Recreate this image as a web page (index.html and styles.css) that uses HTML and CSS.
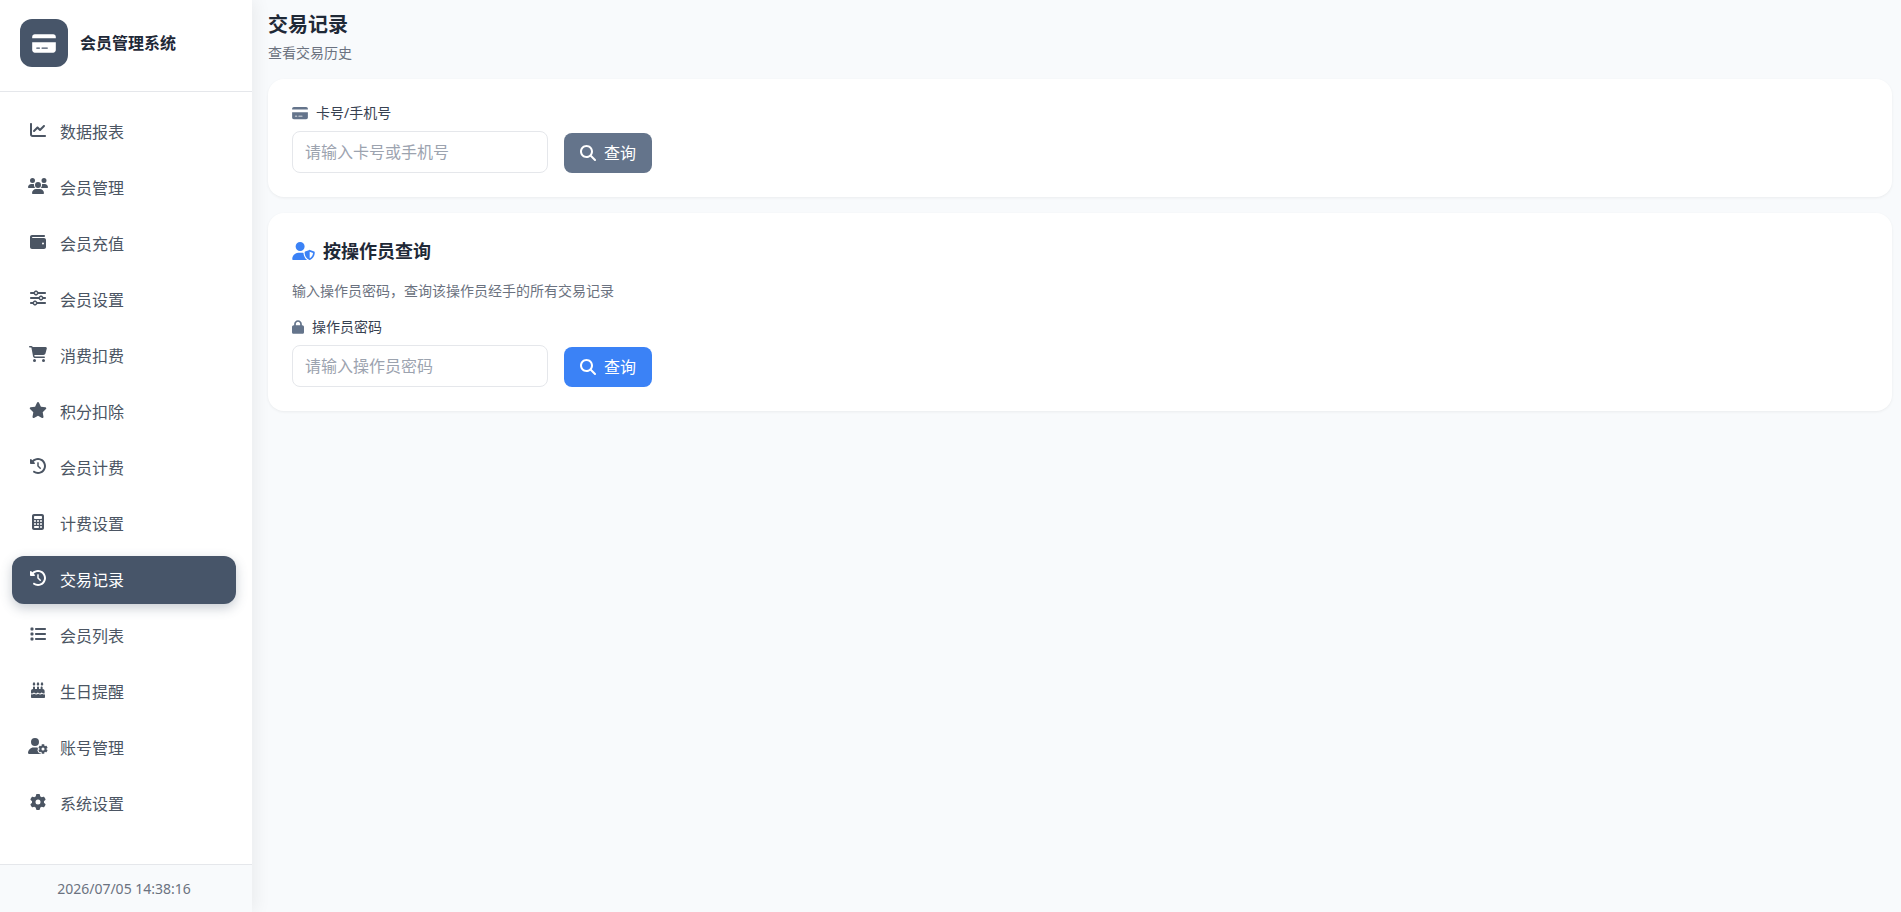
FILE: index.html
```
<!DOCTYPE html>
<html lang="zh-CN">
<head>
    <meta charset="UTF-8">
    <meta name="viewport" content="width=device-width, initial-scale=1.0">
    <title>会员管理系统</title>
    <link rel="stylesheet" href="styles.css">
</head>
<body>
    <!-- 图标 -->
    <svg class="icon-sprite" aria-hidden="true">
        <symbol id="i-card" viewBox="0 0 576 512"><path d="M64 32C28.7 32 0 60.7 0 96v32H576V96c0-35.3-28.7-64-64-64H64zM576 224H0V416c0 35.3 28.7 64 64 64H512c35.3 0 64-28.7 64-64V224zM112 352h64c8.8 0 16 7.2 16 16s-7.2 16-16 16H112c-8.8 0-16-7.2-16-16s7.2-16 16-16zm112 16c0-8.8 7.2-16 16-16H368c8.8 0 16 7.2 16 16s-7.2 16-16 16H240c-8.8 0-16-7.2-16-16z"/></symbol>
        <symbol id="i-chart" viewBox="0 0 512 512"><path d="M64 64c0-17.7-14.3-32-32-32S0 46.3 0 64V400c0 44.2 35.8 80 80 80H480c17.7 0 32-14.3 32-32s-14.3-32-32-32H80c-8.8 0-16-7.2-16-16V64zm406.6 86.6c12.5-12.5 12.5-32.8 0-45.3s-32.8-12.5-45.3 0L320 210.7l-57.4-57.4c-12.5-12.5-32.8-12.5-45.3 0l-112 112c-12.5 12.5-12.5 32.8 0 45.3s32.8 12.5 45.3 0L240 221.3l57.4 57.4c12.5 12.5 32.8 12.5 45.3 0l128-128z"/></symbol>
        <symbol id="i-users" viewBox="0 0 640 512"><path d="M144 0a80 80 0 1 1 0 160A80 80 0 1 1 144 0zM512 0a80 80 0 1 1 0 160A80 80 0 1 1 512 0zM0 298.7C0 239.8 47.8 192 106.7 192h42.7c15.9 0 31 3.5 44.6 9.7c-1.3 7.2-1.9 14.7-1.9 22.3c0 38.2 16.8 72.5 43.3 96c-.2 0-.4 0-.7 0H21.3C9.6 320 0 310.4 0 298.7zM405.3 320c-.2 0-.4 0-.7 0c26.6-23.5 43.3-57.8 43.3-96c0-7.6-.7-15-1.9-22.3c13.6-6.3 28.7-9.7 44.6-9.7h42.7C592.2 192 640 239.8 640 298.7c0 11.8-9.6 21.3-21.3 21.3H405.3zM224 224a96 96 0 1 1 192 0 96 96 0 1 1 -192 0zM128 485.3C128 411.7 187.7 352 261.3 352H378.7C452.3 352 512 411.7 512 485.3c0 14.7-11.9 26.7-26.7 26.7H154.7c-14.7 0-26.7-11.9-26.7-26.7z"/></symbol>
        <symbol id="i-wallet" viewBox="0 0 512 512"><path d="M64 32C28.7 32 0 60.7 0 96V416c0 35.3 28.7 64 64 64H448c35.3 0 64-28.7 64-64V192c0-35.3-28.7-64-64-64H80c-8.8 0-16-7.2-16-16s7.2-16 16-16H448c17.7 0 32-14.3 32-32s-14.3-32-32-32H64zM416 272a32 32 0 1 1 0 64 32 32 0 1 1 0-64z"/></symbol>
        <symbol id="i-sliders" viewBox="0 0 512 512"><path d="M0 416c0 17.7 14.3 32 32 32l54.7 0c12.3 28.3 40.5 48 73.3 48s61-19.7 73.3-48L480 448c17.7 0 32-14.3 32-32s-14.3-32-32-32l-246.7 0c-12.3-28.3-40.5-48-73.3-48s-61 19.7-73.3 48L32 384c-17.7 0-32 14.3-32 32zm128 0a32 32 0 1 1 64 0 32 32 0 1 1 -64 0zM320 256a32 32 0 1 1 64 0 32 32 0 1 1 -64 0zm32-80c-32.8 0-61 19.7-73.3 48L32 224c-17.7 0-32 14.3-32 32s14.3 32 32 32l246.7 0c12.3 28.3 40.5 48 73.3 48s61-19.7 73.3-48l54.7 0c17.7 0 32-14.3 32-32s-14.3-32-32-32l-54.7 0c-12.3-28.3-40.5-48-73.3-48zM192 128a32 32 0 1 1 0-64 32 32 0 1 1 0 64zm73.3-64C253 35.7 224.8 16 192 16s-61 19.7-73.3 48L32 64C14.3 64 0 78.3 0 96s14.3 32 32 32l86.7 0c12.3 28.3 40.5 48 73.3 48s61-19.7 73.3-48L480 128c17.7 0 32-14.3 32-32s-14.3-32-32-32L265.3 64z"/></symbol>
        <symbol id="i-cart" viewBox="0 0 576 512"><path d="M0 24C0 10.7 10.7 0 24 0H69.5c22 0 41.5 12.8 50.6 32h411c26.3 0 45.5 25 38.6 50.4l-41 152.3c-8.5 31.4-37 53.3-69.5 53.3H170.7l5.4 28.5c2.2 11.3 12.1 19.5 23.6 19.5H488c13.3 0 24 10.7 24 24s-10.7 24-24 24H199.7c-34.6 0-64.3-24.6-70.7-58.5L77.4 54.5c-.7-3.8-4-6.5-7.9-6.5H24C10.7 48 0 37.3 0 24zM128 464a48 48 0 1 1 96 0 48 48 0 1 1 -96 0zm336-48a48 48 0 1 1 0 96 48 48 0 1 1 0-96z"/></symbol>
        <symbol id="i-star" viewBox="0 0 576 512"><path d="M316.9 18C311.6 7 300.4 0 288.1 0s-23.4 7-28.8 18L195 150.3 51.4 171.5c-12 1.8-22 10.2-25.7 21.7s-.7 24.2 7.9 32.7L137.8 329 113.2 474.7c-2 12 3 24.2 12.9 31.3s23 8 33.8 2.3l128.3-68.5 128.3 68.5c10.8 5.7 23.9 4.9 33.8-2.3s14.9-19.3 12.9-31.3L438.5 329 542.7 225.9c8.6-8.5 11.7-21.2 7.9-32.7s-13.7-19.9-25.7-21.7L381.2 150.3 316.9 18z"/></symbol>
        <symbol id="i-history" viewBox="0 0 512 512"><path d="M75 75L41 41C25.9 25.9 0 36.6 0 57.9V168c0 13.3 10.7 24 24 24H134.1c21.4 0 32.1-25.9 17-41l-30.8-30.8C155 85.5 203 64 256 64c106 0 192 86 192 192s-86 192-192 192c-40.8 0-78.6-12.7-109.7-34.4c-14.5-10.1-34.4-6.6-44.6 7.9s-6.6 34.4 7.9 44.6C151.2 495 201.7 512 256 512c141.4 0 256-114.6 256-256S397.4 0 256 0C185.3 0 121.3 28.7 75 75zm181 53c-13.3 0-24 10.7-24 24V256c0 6.4 2.5 12.5 7 17l72 72c9.4 9.4 24.6 9.4 33.9 0s9.4-24.6 0-33.9l-65-65V152c0-13.3-10.7-24-24-24z"/></symbol>
        <symbol id="i-calculator" viewBox="0 0 384 512"><path d="M64 0C28.7 0 0 28.7 0 64V448c0 35.3 28.7 64 64 64H320c35.3 0 64-28.7 64-64V64c0-35.3-28.7-64-64-64H64zM96 64H288c17.7 0 32 14.3 32 32v32c0 17.7-14.3 32-32 32H96c-17.7 0-32-14.3-32-32V96c0-17.7 14.3-32 32-32zm32 160a32 32 0 1 1 -64 0 32 32 0 1 1 64 0zM96 352a32 32 0 1 1 0-64 32 32 0 1 1 0 64zM64 416c0-17.7 14.3-32 32-32h96c17.7 0 32 14.3 32 32s-14.3 32-32 32H96c-17.7 0-32-14.3-32-32zM192 256a32 32 0 1 1 0-64 32 32 0 1 1 0 64zm32 64a32 32 0 1 1 -64 0 32 32 0 1 1 64 0zm64-64a32 32 0 1 1 0-64 32 32 0 1 1 0 64zm32 64a32 32 0 1 1 -64 0 32 32 0 1 1 64 0zM288 448a32 32 0 1 1 0-64 32 32 0 1 1 0 64z"/></symbol>
        <symbol id="i-list" viewBox="0 0 512 512"><path d="M40 48C26.7 48 16 58.7 16 72v48c0 13.3 10.7 24 24 24H88c13.3 0 24-10.7 24-24V72c0-13.3-10.7-24-24-24H40zM192 64c-17.7 0-32 14.3-32 32s14.3 32 32 32H480c17.7 0 32-14.3 32-32s-14.3-32-32-32H192zm0 160c-17.7 0-32 14.3-32 32s14.3 32 32 32H480c17.7 0 32-14.3 32-32s-14.3-32-32-32H192zm0 160c-17.7 0-32 14.3-32 32s14.3 32 32 32H480c17.7 0 32-14.3 32-32s-14.3-32-32-32H192zM16 232v48c0 13.3 10.7 24 24 24H88c13.3 0 24-10.7 24-24V232c0-13.3-10.7-24-24-24H40c-13.3 0-24 10.7-24 24zM40 368c-13.3 0-24 10.7-24 24v48c0 13.3 10.7 24 24 24H88c13.3 0 24-10.7 24-24V392c0-13.3-10.7-24-24-24H40z"/></symbol>
        <symbol id="i-cake" viewBox="0 0 448 512"><path d="M86.4 5.5L61.8 47.6C58 54.1 56 61.6 56 69.2V72c0 22.1 17.9 40 40 40s40-17.9 40-40V69.2c0-7.6-2-15-5.8-21.6L105.6 5.5C103.6 2.1 100 0 96 0s-7.6 2.1-9.6 5.5zm128 0L189.8 47.6c-3.8 6.5-5.8 14-5.8 21.6V72c0 22.1 17.9 40 40 40s40-17.9 40-40V69.2c0-7.6-2-15-5.8-21.6L233.6 5.5C231.6 2.1 228 0 224 0s-7.6 2.1-9.6 5.5zM317.8 47.6c-3.8 6.5-5.8 14-5.8 21.6V72c0 22.1 17.9 40 40 40s40-17.9 40-40V69.2c0-7.6-2-15-5.8-21.6L361.6 5.5C359.6 2.1 356 0 352 0s-7.6 2.1-9.6 5.5L317.8 47.6zM128 176c0-17.7-14.3-32-32-32s-32 14.3-32 32v48c-35.3 0-64 28.7-64 64v71c8.3 5.2 18.1 9 28.8 9c20 0 40-13 55-26.400c7-7 17-7 24 0c14 13 32 26.400 52 26.400s38-13 48-26.400c7-7 17-7 24 0c12 13 30 26.400 50 26.400s38-13 50-26.400c7-7 17-7 24 0c12 13 32 26.400 52 26.400c10 0 20-3.800 28.200-9V288c0-35.300-28.700-64-64-64V176c0-17.700-14.300-32-32-32s-32 14.300-32 32v48H256V176c0-17.700-14.300-32-32-32s-32 14.300-32 32v48H128V176zM448 394.600c-8.500 3.300-18.200 5.400-28.800 5.400c-27 0-48-12-63-24c-16 12-40 24-64 24s-46-12-62-24c-14 12-36 24-60 24s-46-12-74-24c-18 12-40 24-67.400 24c-10.600 0-20.300-2.200-28.800-5.400V480c0 17.700 14.300 32 32 32H416c17.700 0 32-14.300 32-32V394.600z"/></symbol>
        <symbol id="i-user-gear" viewBox="0 0 640 512"><path d="M224 0a128 128 0 1 1 0 256A128 128 0 1 1 224 0zM178.300 304h91.400c11.800 0 23.400 1.200 34.500 3.300c-2.100 18.500 7.400 35.600 21.800 44.800c-16.600 10.600-26.700 31.600-20 53.300c4 12.900 9.400 25.500 16.400 37.600s15.200 23.100 24.400 33c15.700 16.900 39.600 18.400 57.200 8.700v.9c0 9.200 2.700 18.500 7.900 26.300H29.700C13.300 512 0 498.700 0 482.300C0 383.800 79.800 304 178.300 304z"/><path d="M436 218.200c0-7 4.500-13.300 11.300-14.800c10.500-2.400 21.500-3.700 32.700-3.700s22.200 1.300 32.700 3.700c6.800 1.500 11.300 7.800 11.300 14.800v30.600c7.900 3.400 15.400 7.700 22.300 12.800l24.900-14.300c6.100-3.500 13.700-2.700 18.500 2.400c7.600 8.100 14.300 17.200 20.100 27.200s10.300 20.400 13.500 31c2.100 6.700-1.100 13.700-7.200 17.200l-25 14.400c.4 4 .7 8.100 .7 12.300s-.2 8.200-.7 12.300l25 14.400c6.100 3.500 9.200 10.500 7.200 17.200c-3.300 10.600-7.800 21-13.500 31s-12.500 19.100-20.100 27.200c-4.800 5.100-12.500 5.900-18.500 2.400l-24.900-14.300c-6.900 5.100-14.300 9.400-22.300 12.800l0 30.600c0 7-4.500 13.300-11.300 14.800c-10.500 2.400-21.500 3.700-32.700 3.700s-22.200-1.300-32.700-3.700c-6.800-1.500-11.300-7.800-11.300-14.800V454.800c-8-3.400-15.600-7.700-22.500-12.900l-24.700 14.300c-6.100 3.500-13.700 2.700-18.500-2.400c-7.600-8.100-14.300-17.200-20.100-27.200s-10.300-20.400-13.500-31c-2.100-6.700 1.100-13.700 7.200-17.200l24.800-14.300c-.4-4.100-.7-8.200-.7-12.400s.2-8.300 .7-12.400L343.800 325c-6.100-3.500-9.200-10.500-7.200-17.200c3.300-10.600 7.700-21 13.500-31s12.500-19.100 20.100-27.200c4.800-5.100 12.400-5.900 18.500-2.400l24.800 14.300c6.900-5.100 14.500-9.400 22.500-12.900V218.200zm92.100 133.500a48.100 48.100 0 1 0 -96.100 0 48.100 48.100 0 1 0 96.100 0z"/></symbol>
        <symbol id="i-gear" viewBox="0 0 512 512"><path d="M495.900 166.600c3.200 8.700 .5 18.400-6.400 24.600l-43.300 39.400c1.100 8.300 1.700 16.800 1.700 25.400s-.6 17.100-1.700 25.400l43.300 39.400c6.900 6.200 9.600 15.900 6.400 24.600c-4.400 11.900-9.700 23.300-15.800 34.300l-4.700 8.100c-6.600 11-14 21.400-22.100 31.200c-5.900 7.200-15.700 9.600-24.500 6.800l-55.700-17.700c-13.400 10.300-28.200 18.900-44 25.400l-12.500 57.100c-2 9.100-9 16.300-18.200 17.800c-13.800 2.300-28 3.500-42.500 3.500s-28.700-1.200-42.500-3.500c-9.200-1.500-16.200-8.700-18.200-17.800l-12.500-57.100c-15.800-6.500-30.600-15.100-44-25.400L83.100 425.900c-8.800 2.800-18.600 .3-24.500-6.800c-8.100-9.800-15.500-20.200-22.100-31.200l-4.700-8.100c-6.100-11-11.400-22.400-15.800-34.300c-3.200-8.700-.5-18.400 6.400-24.600l43.300-39.400C64.600 273.100 64 264.600 64 256s.6-17.100 1.700-25.400L22.400 191.200c-6.900-6.200-9.600-15.900-6.400-24.600c4.400-11.900 9.700-23.300 15.800-34.300l4.700-8.100c6.600-11 14-21.400 22.100-31.200c5.900-7.200 15.700-9.600 24.500-6.800l55.700 17.700c13.400-10.300 28.200-18.900 44-25.400l12.500-57.100c2-9.100 9-16.300 18.200-17.800C227.300 1.200 241.500 0 256 0s28.700 1.200 42.500 3.500c9.200 1.500 16.200 8.700 18.200 17.800l12.500 57.100c15.800 6.500 30.600 15.100 44 25.400l55.700-17.700c8.800-2.800 18.600-.3 24.500 6.800c8.100 9.800 15.500 20.200 22.100 31.200l4.700 8.100c6.100 11 11.400 22.400 15.800 34.300zM256 336a80 80 0 1 0 0-160 80 80 0 1 0 0 160z"/></symbol>
        <symbol id="i-user-shield" viewBox="0 0 640 512"><path d="M224 256A128 128 0 1 0 224 0a128 128 0 1 0 0 256zm-45.700 48C79.800 304 0 383.800 0 482.300C0 498.700 13.300 512 29.700 512H418.300c1.800 0 3.500-.2 5.300-.5c-76.300-55.100-99.800-141-103.100-200.200c-16.100-4.800-33.100-7.300-50.700-7.300H178.300zm308.800-78.300l-120 48C358 277.400 352 286.200 352 296c0 63.300 25.900 168.800 134.800 214.200c5.900 2.500 12.600 2.500 18.500 0C614.100 464.800 640 359.300 640 296c0-9.800-6-18.600-15.100-22.300l-120-48c-5.700-2.300-12.100-2.300-17.800 0zM591.400 312c-3.900 50.700-27.200 116.700-95.400 149.700V273.800L591.400 312z"/></symbol>
        <symbol id="i-lock" viewBox="0 0 448 512"><path d="M144 144v48H304V144c0-44.200-35.800-80-80-80s-80 35.800-80 80zM80 192V144C80 64.500 144.500 0 224 0s144 64.500 144 144v48h16c35.300 0 64 28.700 64 64V448c0 35.300-28.700 64-64 64H64c-35.300 0-64-28.700-64-64V256c0-35.300 28.700-64 64-64H80z"/></symbol>
        <symbol id="i-search" viewBox="0 0 512 512"><path d="M416 208c0 45.900-14.900 88.300-40 122.700L502.600 457.400c12.500 12.500 12.500 32.800 0 45.300s-32.800 12.500-45.300 0L330.700 376c-34.400 25.200-76.800 40-122.700 40C93.100 416 0 322.900 0 208S93.100 0 208 0S416 93.100 416 208zM208 352a144 144 0 1 0 0-288 144 144 0 1 0 0 288z"/></symbol>
    </svg>

    <div class="app">
        <!-- 侧边栏 -->
        <aside class="sidebar">
            <div class="sidebar-header">
                <div class="logo"><svg class="logo-icon"><use href="#i-card"/></svg></div>
                <span class="brand">会员管理系统</span>
            </div>

            <nav class="sidebar-nav">
                <a href="#report" class="nav-item"><svg class="nav-icon"><use href="#i-chart"/></svg><span>数据报表</span></a>
                <a href="#members" class="nav-item"><svg class="nav-icon"><use href="#i-users"/></svg><span>会员管理</span></a>
                <a href="#recharge" class="nav-item"><svg class="nav-icon"><use href="#i-wallet"/></svg><span>会员充值</span></a>
                <a href="#member-settings" class="nav-item"><svg class="nav-icon"><use href="#i-sliders"/></svg><span>会员设置</span></a>
                <a href="#consume" class="nav-item"><svg class="nav-icon"><use href="#i-cart"/></svg><span>消费扣费</span></a>
                <a href="#points" class="nav-item"><svg class="nav-icon"><use href="#i-star"/></svg><span>积分扣除</span></a>
                <a href="#billing" class="nav-item"><svg class="nav-icon"><use href="#i-history"/></svg><span>会员计费</span></a>
                <a href="#billing-settings" class="nav-item"><svg class="nav-icon"><use href="#i-calculator"/></svg><span>计费设置</span></a>
                <a href="#transactions" class="nav-item active" aria-current="page"><svg class="nav-icon"><use href="#i-history"/></svg><span>交易记录</span></a>
                <a href="#member-list" class="nav-item"><svg class="nav-icon"><use href="#i-list"/></svg><span>会员列表</span></a>
                <a href="#birthday" class="nav-item"><svg class="nav-icon"><use href="#i-cake"/></svg><span>生日提醒</span></a>
                <a href="#accounts" class="nav-item"><svg class="nav-icon"><use href="#i-user-gear"/></svg><span>账号管理</span></a>
                <a href="#settings" class="nav-item"><svg class="nav-icon"><use href="#i-gear"/></svg><span>系统设置</span></a>
            </nav>

            <div class="sidebar-footer">2026/07/05 14:38:16</div>
        </aside>

        <!-- 主内容 -->
        <main class="main">
            <header class="page-header">
                <h1 class="page-title">交易记录</h1>
                <p class="page-subtitle">查看交易历史</p>
            </header>

            <section class="card">
                <form class="search-form">
                    <div class="form-group">
                        <label class="form-label" for="keyword"><svg class="label-icon"><use href="#i-card"/></svg>卡号/手机号</label>
                        <input type="text" id="keyword" class="form-input" placeholder="请输入卡号或手机号">
                    </div>
                    <button type="button" class="btn btn-secondary"><svg class="btn-icon"><use href="#i-search"/></svg>查询</button>
                </form>
            </section>

            <section class="card">
                <h2 class="card-title"><svg class="title-icon"><use href="#i-user-shield"/></svg>按操作员查询</h2>
                <p class="card-desc">输入操作员密码，查询该操作员经手的所有交易记录</p>
                <form class="search-form">
                    <div class="form-group">
                        <label class="form-label" for="operator-password"><svg class="label-icon label-icon-lock"><use href="#i-lock"/></svg>操作员密码</label>
                        <input type="password" id="operator-password" class="form-input" placeholder="请输入操作员密码">
                    </div>
                    <button type="button" class="btn btn-primary"><svg class="btn-icon"><use href="#i-search"/></svg>查询</button>
                </form>
            </section>
        </main>
    </div>
</body>
</html>
```
FILE: styles.css
```
* {
    margin: 0;
    padding: 0;
    box-sizing: border-box;
}

body {
    font-family: "Noto Sans", "Noto Sans CJK SC", sans-serif;
    font-size: 16px;
    line-height: 24px;
    color: #1f2937;
    background: #f8fafc;
}

svg {
    display: block;
    flex-shrink: 0;
    fill: currentColor;
}

.icon-sprite {
    display: none;
}

.app {
    display: flex;
    min-height: 100vh;
}

/* 侧边栏 */
.sidebar {
    display: flex;
    flex-direction: column;
    flex-shrink: 0;
    width: 252px;
    background: #ffffff;
    box-shadow: 4px 0 16px rgba(0, 0, 0, 0.06);
}

.sidebar-header {
    display: flex;
    align-items: center;
    gap: 12px;
    padding: 19px 20px 24px;
    border-bottom: 1px solid #e5e7eb;
}

.logo {
    display: flex;
    align-items: center;
    justify-content: center;
    width: 48px;
    height: 48px;
    border-radius: 12px;
    background: #475569;
    color: #ffffff;
}

.logo-icon {
    width: 24px;
    height: 21px;
}

.brand {
    font-weight: 600;
}

.sidebar-nav {
    display: flex;
    flex: 1;
    flex-direction: column;
    gap: 8px;
    padding: 16px 16px 16px 12px;
}

.nav-item {
    display: flex;
    align-items: center;
    gap: 12px;
    padding: 12px 16px;
    border-radius: 12px;
    color: #4b5563;
    text-decoration: none;
}

.nav-item.active {
    background: #475569;
    color: #ffffff;
    box-shadow: 0 4px 12px rgba(71, 85, 105, 0.3);
}

.nav-icon {
    width: 20px;
    height: 16px;
    margin-bottom: 4px;
}

.sidebar-footer {
    padding: 12px 4px 11px 0;
    border-top: 1px solid #e5e7eb;
    background: #f8fafc;
    color: #6b7280;
    font-size: 14px;
    text-align: center;
}

/* 主内容 */
.main {
    flex: 1;
    min-width: 0;
    padding: 11px 9px 16px 16px;
}

.page-header {
    margin-bottom: 16px;
}

.page-title {
    font-size: 20px;
    font-weight: 700;
    line-height: 28px;
}

.page-subtitle {
    margin-top: 4px;
    color: #6b7280;
    font-size: 14px;
    line-height: 20px;
}

.card {
    margin-bottom: 16px;
    padding: 24px;
    border-radius: 16px;
    background: #ffffff;
    box-shadow: 0 1px 3px rgba(0, 0, 0, 0.06);
}

.card-title {
    display: flex;
    align-items: center;
    gap: 8px;
    margin-bottom: 16px;
    font-size: 18px;
    font-weight: 700;
    line-height: 28px;
}

.title-icon {
    width: 23px;
    height: 18px;
    color: #3b82f6;
}

.card-desc {
    margin-bottom: 16px;
    color: #6b7280;
    font-size: 14px;
    line-height: 20px;
}

.search-form {
    display: flex;
    align-items: flex-end;
    gap: 16px;
}

.form-label {
    display: flex;
    align-items: center;
    gap: 8px;
    margin-bottom: 8px;
    color: #374151;
    font-size: 14px;
    line-height: 20px;
}

.label-icon {
    width: 16px;
    height: 14px;
    color: #64748b;
}

.label-icon-lock {
    width: 12px;
}

.form-input {
    display: block;
    width: 256px;
    padding: 8px 12px;
    border: 1px solid #e5e7eb;
    border-radius: 8px;
    background: #ffffff;
    color: #1f2937;
    font: inherit;
}

.form-input:focus {
    outline: none;
    border-color: #64748b;
}

.form-input::placeholder {
    color: #9ca3af;
}

.btn {
    display: flex;
    align-items: center;
    gap: 8px;
    padding: 8px 16px;
    border: none;
    border-radius: 8px;
    color: #ffffff;
    font: inherit;
    cursor: pointer;
}

.btn-secondary {
    background: #64748b;
}

.btn-primary {
    background: #3b82f6;
}

.btn-icon {
    width: 16px;
    height: 16px;
}
```
